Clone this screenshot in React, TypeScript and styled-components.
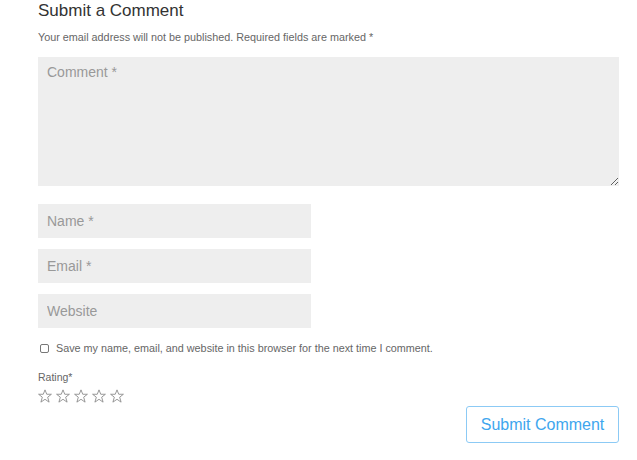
import React from "react";
import styled, { createGlobalStyle } from "styled-components";

const Global = createGlobalStyle`
  html, body { margin: 0; padding: 0; background: #fff; }
  body { font-family: "Liberation Sans", Arial, sans-serif; }
  * { box-sizing: border-box; }
`;

const Form = styled.form`
  width: 637px;
  padding: 0 18px 0 38px;
  display: flex;
  flex-direction: column;
`;

const Title = styled.h3`
  margin: 0;
  padding-top: 1px;
  font-size: 17px;
  line-height: 20px;
  font-weight: 400;
  color: #333;
`;

const Notice = styled.p`
  margin: 9px 0 0;
  font-size: 10.8px;
  line-height: 14px;
  color: #666;
`;

const TextArea = styled.textarea`
  margin-top: 13px;
  width: 581px;
  height: 129px;
  border: none;
  background: #eee;
  padding: 6px 9px;
  font-family: "Liberation Sans", Arial, sans-serif;
  font-size: 14px;
  line-height: 18px;
  color: #333;
  resize: vertical;
  outline: none;
  &::placeholder { color: #999; }
`;

const Fields = styled.div`
  margin-top: 18px;
  display: flex;
  flex-direction: column;
  gap: 11px;
`;

const Input = styled.input`
  width: 273px;
  height: 34px;
  border: none;
  background: #eee;
  padding: 0 9px;
  font-family: "Liberation Sans", Arial, sans-serif;
  font-size: 14px;
  color: #333;
  outline: none;
  &::placeholder { color: #999; }
`;

const ConsentRow = styled.label`
  margin-top: 13px;
  display: flex;
  align-items: center;
  gap: 7px;
  padding-left: 2px;
  font-size: 10.8px;
  line-height: 14px;
  color: #666;
`;

const Check = styled.input`
  appearance: none;
  margin: 0;
  width: 9px;
  height: 9px;
  border: 1px solid #777;
  border-radius: 2px;
  background: #fff;
  flex: none;
`;

const RatingLabel = styled.div`
  margin-top: 15px;
  font-size: 10.5px;
  line-height: 14px;
  color: #666;
`;

const Stars = styled.div`
  margin-top: 5px;
  display: flex;
  gap: 4px;
  height: 14px;
`;

const Actions = styled.div`
  display: flex;
  justify-content: flex-end;
  margin-top: 3px;
`;

const SubmitButton = styled.button`
  width: 153px;
  height: 37px;
  background: #fff;
  border: 1px solid #8ccaf5;
  border-radius: 3px;
  font-family: "Liberation Sans", Arial, sans-serif;
  font-size: 16px;
  color: #3ea6ee;
  cursor: pointer;
`;

const Star = () => (
  <svg width="14" height="14" viewBox="0 0 24 24" fill="none" stroke="#8a8a8a" strokeWidth="1.5" strokeLinejoin="miter">
    <polygon points="12,1.5 15,9 23,9 16.6,14 19,22.5 12,17.6 5,22.5 7.4,14 1,9 9,9" />
  </svg>
);

export default function App() {
  return (
    <>
      <Global />
      <Form onSubmit={(e) => e.preventDefault()}>
        <Title>Submit a Comment</Title>
        <Notice>Your email address will not be published. Required fields are marked *</Notice>
        <TextArea placeholder="Comment *" />
        <Fields>
          <Input placeholder="Name *" />
          <Input placeholder="Email *" />
          <Input placeholder="Website" />
        </Fields>
        <ConsentRow>
          <Check type="checkbox" />
          Save my name, email, and website in this browser for the next time I comment.
        </ConsentRow>
        <RatingLabel>Rating*</RatingLabel>
        <Stars>
          {[0, 1, 2, 3, 4].map((i) => (
            <Star key={i} />
          ))}
        </Stars>
        <Actions>
          <SubmitButton type="submit">Submit Comment</SubmitButton>
        </Actions>
      </Form>
    </>
  );
}
